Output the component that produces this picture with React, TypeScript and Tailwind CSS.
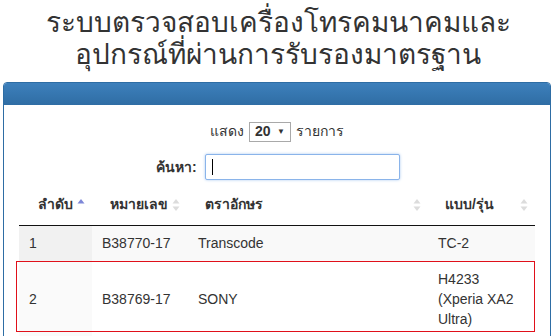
import React from "react";

const SortBoth = () => (
  <svg width="8" height="16" viewBox="0 0 8 16" className="shrink-0">
    <path d="M4 2 L7.5 6.5 L0.5 6.5 Z" fill="#dcdcdc" />
    <path d="M4 14 L7.5 9.5 L0.5 9.5 Z" fill="#dcdcdc" />
  </svg>
);

const SortAsc = () => (
  <svg width="8" height="16" viewBox="0 0 8 16" className="shrink-0">
    <path d="M4 2 L7.5 6.5 L0.5 6.5 Z" fill="#7d87d8" />
  </svg>
);

export default function App() {
  return (
    <div className="relative w-[556px] h-[336px] overflow-hidden bg-white text-[#333] font-['Liberation_Sans',sans-serif]">
      <h2 className="pt-[7px] text-center text-[28px] leading-[32px] font-medium text-[#333]">
        ระบบตรวจสอบเครื่องโทรคมนาคมและ
        <br />
        อุปกรณ์ที่ผ่านการรับรองมาตรฐาน
      </h2>
      <div className="mx-[3px] mt-[11px] w-[548px] rounded-t-[4px] border border-[#2e6da4] bg-white">
        <div className="h-[22px] rounded-t-[3px] bg-gradient-to-b from-[#3d80bc] to-[#2f6da4]" />
        <div className="px-[15px] pt-[16px]">
          <div className="flex items-center justify-center gap-[5px] text-[14px]">
            <span>แสดง</span>
            <div className="flex h-[20px] w-[42px] items-center justify-between border border-[#a9a9a9] bg-white px-[5px] text-[14px] font-bold">
              <span>20</span>
              <span className="text-[8px] text-[#333]">▼</span>
            </div>
            <span>รายการ</span>
          </div>
          <div className="mt-[12px] flex items-center gap-[8px] pl-[137px] text-[14px] font-bold">
            <span>ค้นหา:</span>
            <div className="relative h-[26px] w-[195px] rounded-[2px] border border-[#8ab4ea] bg-white shadow-[0_0_3px_#a9c8f0]">
              <div className="absolute left-[6px] top-[4px] h-[16px] w-px bg-black" />
            </div>
          </div>
          <table className="mt-[5px] w-[516px] border-collapse text-[14px]">
            <thead>
              <tr className="h-[40px] border-b border-[#111]">
                <th className="w-[73px] pl-[19px] pr-[7px] text-left font-bold">
                  <div className="flex items-center gap-[4px]"><span>ลำดับ</span><SortAsc /></div>
                </th>
                <th className="w-[96px] pl-[18px] pr-[8px] text-left font-bold">
                  <div className="flex items-center justify-between"><span>หมายเลข</span><SortBoth /></div>
                </th>
                <th className="w-[240px] pl-[17px] pr-[7px] text-left font-bold">
                  <div className="flex items-center justify-between"><span>ตราอักษร</span><SortBoth /></div>
                </th>
                <th className="w-[107px] pl-[17px] pr-[7px] text-left font-bold">
                  <div className="flex items-center justify-between"><span>แบบ/รุ่น</span><SortBoth /></div>
                </th>
              </tr>
            </thead>
            <tbody className="leading-[20px]">
              <tr className="bg-[#f9f9f9]">
                <td className="h-[36px] bg-[#f1f1f1] px-[10px] align-middle">1</td>
                <td className="px-[10px]">B38770-17</td>
                <td className="px-[10px]">Transcode</td>
                <td className="px-[10px]">TC-2</td>
              </tr>
              <tr className="bg-white">
                <td className="bg-[#fafafa] px-[10px] py-[8px]">2</td>
                <td className="px-[10px] py-[8px]">B38769-17</td>
                <td className="px-[10px] py-[8px]">SONY</td>
                <td className="px-[10px] py-[8px]">
                  H4233
                  <br />
                  (Xperia XA2
                  <br />
                  Ultra)
                </td>
              </tr>
            </tbody>
          </table>
        </div>
      </div>
      <div className="pointer-events-none absolute left-[16px] top-[261px] h-[71px] w-[519px] border border-[#e0101a]" />
    </div>
  );
}
